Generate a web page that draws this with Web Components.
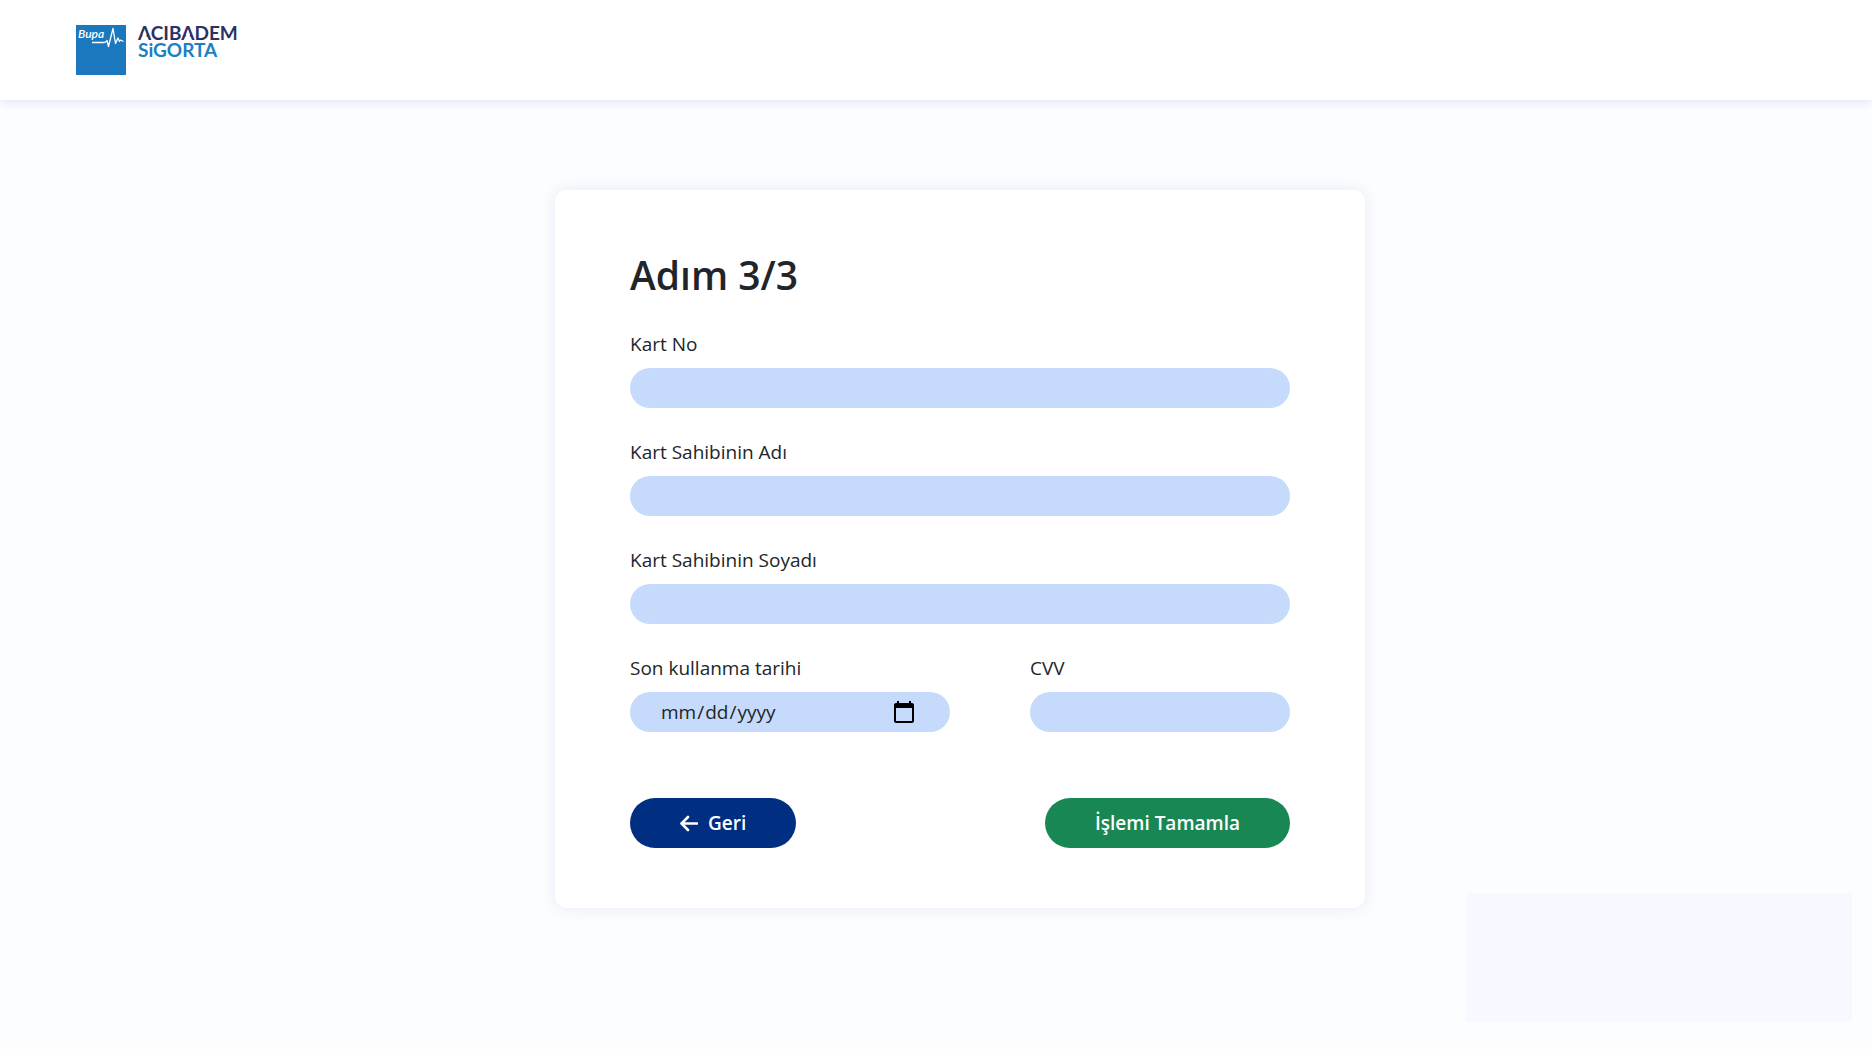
<!DOCTYPE html>
<html lang="tr">
<head>
<meta charset="utf-8">
<meta name="viewport" content="width=device-width, initial-scale=1">
<title>Adım 3/3</title>
<style>
  body {
    margin: 0;
    min-height: 100vh;
    background: #fcfdff;
    color: #212529;
    font: 19px/28px "Segoe UI", "Open Sans", "Noto Sans", sans-serif;
  }
</style>
</head>
<body>
<payment-page></payment-page>
<script>
const define = (name, html, setup) => customElements.define(name, class extends HTMLElement {
  connectedCallback() {
    if (this.shadowRoot) return;
    const root = this.attachShadow({ mode: "open" });
    const template = document.createElement("template");
    template.innerHTML = "<style>*{box-sizing:border-box}</style>" + html;
    root.append(template.content.cloneNode(true));
    if (setup) setup(this, root);
  }
});

define("brand-logo", `
  <style>
    :host { display: block; }
    a { display: block; text-decoration: none; }
    svg { display: block; overflow: visible; }
  </style>
  <a href="#" aria-label="Bupa Acıbadem Sigorta">
    <svg width="170" height="50" viewBox="0 0 170 50">
      <rect width="50" height="50" fill="#1b78be"/>
      <text x="2" y="13" font-family="Lato, sans-serif" font-size="12" font-weight="600" font-style="italic" fill="#fff">Bupa</text>
      <path d="M16 17.500H28Q30 17.500 31 15.500L32.500 21.500L37 3.500L39.500 18.500L42 13L43.500 16.500Q44 14.500 45.500 15.500T47.500 16" fill="none" stroke="#fff" stroke-width="1.300" stroke-linejoin="round"/>
      <g font-family="Lato, sans-serif" font-size="19" font-weight="700">
        <text id="top" x="62" y="15" fill="#2b3166">ACIBADEM</text>
        <text x="62" y="32" fill="#1b7fc4">SiGORTA</text>
      </g>
    </svg>
  </a>`, (host, root) => {
    // The wordmark's A has no crossbar: open the counter of each one.
    const word = root.getElementById("top");
    [...word.textContent].forEach((letter, i) => {
      if (letter !== "A") return;
      const a = word.getStartPositionOfChar(i).x, b = word.getEndPositionOfChar(i).x, c = (a + b) / 2;
      const gap = document.createElementNS("http://www.w3.org/2000/svg", "path");
      gap.setAttribute("d", `M${c} 5L${c + 3.6} 15.200H${c - 3.6}Z`);
      gap.setAttribute("fill", "#fff");
      word.after(gap);
    });
  });

define("site-header", `
  <style>
    :host { display: block; background: #fff; box-shadow: 0 2px 10px rgba(60, 60, 180, .14); }
    header { display: flex; align-items: center; min-height: 100px; padding: 0 76px; }
  </style>
  <header><slot></slot></header>`);

define("form-card", `
  <style>
    :host { display: block; width: 100%; max-width: 810px; background: #fff; border-radius: 12px;
            box-shadow: 0 0 15px rgba(60, 60, 180, .1); padding: 60px 75px; }
    h1 { margin: 0 0 30px; font-size: 39px; line-height: 50px; font-weight: 600; }
  </style>
  <h1></h1><slot></slot>`, (host, root) => {
    root.querySelector("h1").textContent = host.getAttribute("heading");
  });

define("form-field", `
  <style>
    :host { display: block; }
    label { display: block; margin-bottom: 10px; }
    input { display: block; width: 100%; height: 40px; padding: 0 30px; border: 0; border-radius: 20px;
            background: #c6dbfc; color: inherit; font: inherit; outline-color: #002f82; }
    input::-webkit-calendar-picker-indicator { width: 24px; height: 24px; margin-right: 4px; padding: 0; background-size: 24px 24px; }
  </style>
  <label for="field"></label><input id="field">`, (host, root) => {
    root.querySelector("label").textContent = host.getAttribute("label");
    root.querySelector("input").type = host.getAttribute("type") || "text";
  });

define("pill-button", `
  <style>
    :host { display: block; }
    button { display: flex; align-items: center; justify-content: center; gap: 10px; height: 50px; padding: 0 50px;
             border: 0; border-radius: 25px; background: var(--pill, #002f82); color: #fff;
             font: inherit; font-weight: 600; white-space: nowrap; cursor: pointer; }
  </style>
  <button type="button"><slot name="icon"></slot><span><slot></slot></span></button>`);

define("support-panel", `
  <style>
    :host { display: block; position: fixed; right: 20px; bottom: 27px; width: 386px; height: 129px; background: #f6f9ff; }
  </style>`);

define("payment-page", `
  <style>
    :host { display: block; }
    main { display: flex; justify-content: center; padding: 90px 24px 90px 72px; }
    form { display: grid; gap: 30px; }
    .row { display: flex; justify-content: space-between; gap: 80px; }
    .date { flex: 320 1 0; }
    .cvv { flex: 260 1 0; }
    .actions { display: flex; justify-content: space-between; margin-top: 36px; }
    .done { --pill: #198754; }
    svg { display: block; }
  </style>
  <site-header><brand-logo></brand-logo></site-header>
  <main>
    <form-card heading="Adım 3/3">
      <form>
        <form-field label="Kart No"></form-field>
        <form-field label="Kart Sahibinin Adı"></form-field>
        <form-field label="Kart Sahibinin Soyadı"></form-field>
        <div class="row">
          <form-field class="date" label="Son kullanma tarihi" type="date"></form-field>
          <form-field class="cvv" label="CVV"></form-field>
        </div>
        <div class="actions">
          <pill-button>
            <svg slot="icon" width="18" height="18" viewBox="0 0 18 18" fill="none" stroke="#fff" stroke-width="2.600" stroke-linecap="round" stroke-linejoin="round"><path d="M8 3L1.500 9.500L8 16M1.500 9.500H17"/></svg>Geri</pill-button>
          <pill-button class="done">İşlemi Tamamla</pill-button>
        </div>
      </form>
    </form-card>
  </main>
  <support-panel></support-panel>`);
</script>
</body>
</html>
